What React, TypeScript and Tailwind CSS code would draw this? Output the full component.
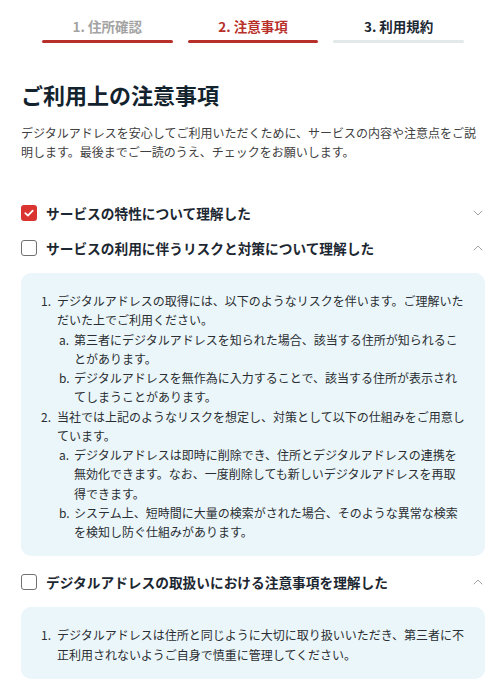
import { useState } from 'react';

type Item = { text: string; sub?: string[] };
type Section = { id: string; title: string; checked: boolean; open: boolean; items: Item[] };

const steps = [
  { label: '1. 住所確認', text: 'text-[#a3a3a3]', bar: 'bg-[#b8302a]' },
  { label: '2. 注意事項', text: 'text-[#b8302a]', bar: 'bg-[#b8302a]' },
  { label: '3. 利用規約', text: 'text-[#1b2833]', bar: 'bg-[#e3e8ea]' },
];

const initialSections: Section[] = [
  { id: 'feature', title: 'サービスの特性について理解した', checked: true, open: false, items: [] },
  {
    id: 'risk',
    title: 'サービスの利用に伴うリスクと対策について理解した',
    checked: false,
    open: true,
    items: [
      {
        text: 'デジタルアドレスの取得には、以下のようなリスクを伴います。ご理解いただいた上でご利用ください。',
        sub: [
          '第三者にデジタルアドレスを知られた場合、該当する住所が知られることがあります。',
          'デジタルアドレスを無作為に入力することで、該当する住所が表示されてしまうことがあります。',
        ],
      },
      {
        text: '当社では上記のようなリスクを想定し、対策として以下の仕組みをご用意しています。',
        sub: [
          'デジタルアドレスは即時に削除でき、住所とデジタルアドレスの連携を無効化できます。なお、一度削除しても新しいデジタルアドレスを再取得できます。',
          'システム上、短時間に大量の検索がされた場合、そのような異常な検索を検知し防ぐ仕組みがあります。',
        ],
      },
    ],
  },
  {
    id: 'handling',
    title: 'デジタルアドレスの取扱いにおける注意事項を理解した',
    checked: false,
    open: true,
    items: [
      { text: 'デジタルアドレスは住所と同じように大切に取り扱いいただき、第三者に不正利用されないようご自身で慎重に管理してください。' },
    ],
  },
];

function Chevron({ up }: { up: boolean }) {
  return (
    <svg viewBox="0 0 12 12" className="w-[12px] h-[12px] text-[#a0a5a9]" fill="none" stroke="currentColor" strokeWidth="1" strokeLinecap="round" strokeLinejoin="round">
      {up ? <path d="M2 8 L6 4 L10 8" /> : <path d="M2 4 L6 8 L10 4" />}
    </svg>
  );
}

function CheckBox({ checked }: { checked: boolean }) {
  if (checked) {
    return (
      <span className="w-[16px] h-[16px] shrink-0 rounded-[3px] bg-[#d9342f] flex items-center justify-center">
        <svg viewBox="0 0 16 16" className="w-[16px] h-[16px]" fill="none" stroke="white" strokeWidth="1.8" strokeLinecap="round" strokeLinejoin="round">
          <path d="M4.3 8.2 L6.9 10.6 L11.7 5.6" />
        </svg>
      </span>
    );
  }
  return <span className="w-[16px] h-[16px] shrink-0 rounded-[3px] border-[1.5px] border-[#707070] bg-white" />;
}

export default function App() {
  const [sections, setSections] = useState(initialSections);

  const toggleCheck = (id: string) =>
    setSections((prev) => prev.map((s) => (s.id === id ? { ...s, checked: !s.checked } : s)));
  const toggleOpen = (id: string) =>
    setSections((prev) => prev.map((s) => (s.id === id ? { ...s, open: !s.open } : s)));

  return (
    <div lang="ja" className="min-h-screen bg-white pl-[21px] pr-[15px] font-['Noto_Sans_CJK_JP',sans-serif]">
      {/* Stepper */}
      <div className="grid grid-cols-3 gap-[15px] px-[21px] pt-[16px]">
        {steps.map((step) => (
          <div key={step.label} className="flex flex-col items-center">
            <div className={`text-[13.5px] leading-[20px] font-bold ${step.text}`}>{step.label}</div>
            <div className={`mt-[4px] h-[3px] w-full rounded-full ${step.bar}`} />
          </div>
        ))}
      </div>

      {/* Heading */}
      <h1 className="mt-[36px] text-[22px] leading-[30px] font-bold text-[#13232e]">ご利用上の注意事項</h1>
      <p className="mt-[14px] text-[12px] leading-[19px] text-[#404040]">
        デジタルアドレスを安心してご利用いただくために、サービスの内容や注意点をご説明します。最後までご一読のうえ、チェックをお願いします。
      </p>

      {/* Checklist */}
      <div className="mt-[34px]">
        {sections.map((section) => (
          <div key={section.id}>
            <div className="h-[35px] flex items-center">
              <button type="button" onClick={() => toggleCheck(section.id)} className="flex items-center gap-[9px] flex-1 text-left">
                <CheckBox checked={section.checked} />
                <span className="text-[13.7px] leading-[20px] font-bold text-[#1c2731]">{section.title}</span>
              </button>
              <button type="button" onClick={() => toggleOpen(section.id)} className="pr-[1px]">
                <Chevron up={section.open} />
              </button>
            </div>

            {section.open && section.items.length > 0 && (
              <div className="mt-[8px] mb-[8px] rounded-[10px] bg-[#ebf6fa] pl-[20px] pr-[18px] pt-[18px] pb-[15px]">
                <ol className="text-[12px] leading-[19.25px] text-[#2a2e32]">
                  {section.items.map((item, i) => (
                    <li key={i} className="flex">
                      <span className="w-[16px] shrink-0">{i + 1}.</span>
                      <div className="flex-1 min-w-0">
                        <div>{item.text}</div>
                        {item.sub && (
                          <ol>
                            {item.sub.map((s, j) => (
                              <li key={j} className="flex pl-[2px]">
                                <span className="w-[15px] shrink-0">{String.fromCharCode(97 + j)}.</span>
                                <div className="flex-1 min-w-0">{s}</div>
                              </li>
                            ))}
                          </ol>
                        )}
                      </div>
                    </li>
                  ))}
                </ol>
              </div>
            )}
          </div>
        ))}
      </div>
    </div>
  );
}
